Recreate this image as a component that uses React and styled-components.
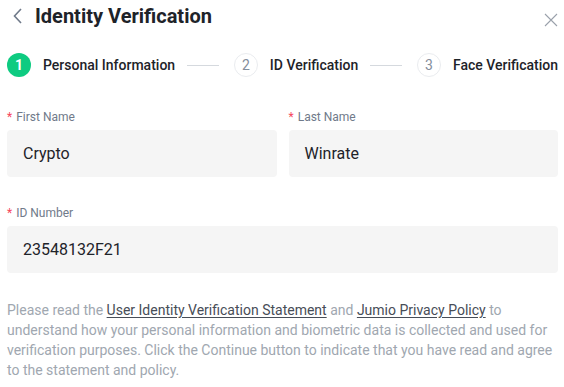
import React from "react";
import styled, { createGlobalStyle } from "styled-components";

const Global = createGlobalStyle`
  html, body { margin: 0; padding: 0; background: #fff; }
  body { font-family: Roboto, "Noto Sans", "Liberation Sans", sans-serif; -webkit-font-smoothing: antialiased; }
  * { box-sizing: border-box; }
`;

const Modal = styled.div`
  width: 564px;
  padding: 0 6px 0 7px;
`;

const Header = styled.div`
  height: 32px;
  display: flex;
  align-items: center;
  justify-content: space-between;
`;

const TitleGroup = styled.div`
  display: flex;
  align-items: center;
  gap: 11px;
`;

const IconButton = styled.button`
  border: 0;
  background: none;
  padding: 0;
  display: flex;
  align-items: center;
  justify-content: center;
  cursor: pointer;
  color: ${p => p.$color || "#707A8A"};
  margin-left: ${p => p.$ml || 0}px;
  margin-top: ${p => p.$mt || 0}px;
`;

const Title = styled.h1`
  margin: 0;
  font-size: 20px;
  font-weight: 700;
  color: #1E2329;
`;

const Stepper = styled.div`
  margin-top: 21px;
  display: flex;
  align-items: center;
  gap: 12px;
`;

const Step = styled.div`
  display: flex;
  align-items: center;
  gap: 12px;
  flex-shrink: 0;
`;

const StepCircle = styled.div`
  width: 24px;
  height: 24px;
  border-radius: 50%;
  display: flex;
  align-items: center;
  justify-content: center;
  font-size: 14px;
  font-weight: ${p => (p.$active ? 700 : 400)};
  color: ${p => (p.$active ? "#fff" : "#848E9C")};
  background: ${p => (p.$active ? "#0ECB81" : "#fff")};
  border: ${p => (p.$active ? "none" : "1px solid #EAECEF")};
`;

const StepLabel = styled.span`
  font-size: 14px;
  font-weight: 500;
  color: #1E2329;
  white-space: nowrap;
`;

const Connector = styled.div`
  flex: 1;
  height: 1px;
  background: #D5D9DE;
  margin-right: 3px;
`;

const Row = styled.div`
  display: grid;
  grid-template-columns: ${p => (p.$cols === 2 ? "1fr 1fr" : "1fr")};
  column-gap: 12px;
  margin-top: ${p => p.$mt}px;
`;

const Field = styled.div`
  display: flex;
  flex-direction: column;
`;

const Label = styled.label`
  font-size: 12px;
  line-height: 16px;
  color: #707A8A;
  margin-bottom: 5px;
  display: flex;
  gap: 4px;
`;

const Star = styled.span`
  color: #F6465D;
`;

const Input = styled.div`
  height: 47px;
  background: #F5F5F5;
  border-radius: 4px;
  padding: 0 16px;
  display: flex;
  align-items: center;
  font-size: 16px;
  color: #1E2329;
`;

const Notice = styled.p`
  margin: 27px 0 0;
  font-size: 14px;
  line-height: 20px;
  color: #A0A7B0;
`;

const Link = styled.a`
  color: #474D57;
  text-decoration: underline;
  text-underline-offset: 2px;
`;

const steps = ["Personal Information", "ID Verification", "Face Verification"];

export default function App() {
  return (
    <>
      <Global />
      <Modal>
        <Header>
          <TitleGroup>
            <IconButton $color="#707A8A" $ml={5}>
              <svg width="12" height="16" viewBox="0 0 12 16" fill="none">
                <path d="M9 1L2.5 8L9 15" stroke="currentColor" strokeWidth="1.6" />
              </svg>
            </IconButton>
            <Title>Identity Verification</Title>
          </TitleGroup>
          <IconButton $color="#9AA1AB" $mt={7}>
            <svg width="14" height="14" viewBox="0 0 14 14" fill="none">
              <path d="M1 1L13 13M13 1L1 13" stroke="currentColor" strokeWidth="1.1" />
            </svg>
          </IconButton>
        </Header>

        <Stepper>
          {steps.map((s, i) => (
            <React.Fragment key={s}>
              {i > 0 && <Connector />}
              <Step>
                <StepCircle $active={i === 0}>{i + 1}</StepCircle>
                <StepLabel>{s}</StepLabel>
              </Step>
            </React.Fragment>
          ))}
        </Stepper>

        <Row $cols={2} $mt={32}>
          <Field>
            <Label><Star>*</Star>First Name</Label>
            <Input>Crypto</Input>
          </Field>
          <Field>
            <Label><Star>*</Star>Last Name</Label>
            <Input>Winrate</Input>
          </Field>
        </Row>

        <Row $mt={28}>
          <Field>
            <Label><Star>*</Star>ID Number</Label>
            <Input>23548132F21</Input>
          </Field>
        </Row>

        <Notice>
          Please read the <Link href="#">User Identity Verification Statement</Link> and{" "}
          <Link href="#">Jumio Privacy Policy</Link> to understand how your personal information and
          biometric data is collected and used for verification purposes. Click the Continue button to
          indicate that you have read and agree to the statement and policy.
        </Notice>
      </Modal>
    </>
  );
}
